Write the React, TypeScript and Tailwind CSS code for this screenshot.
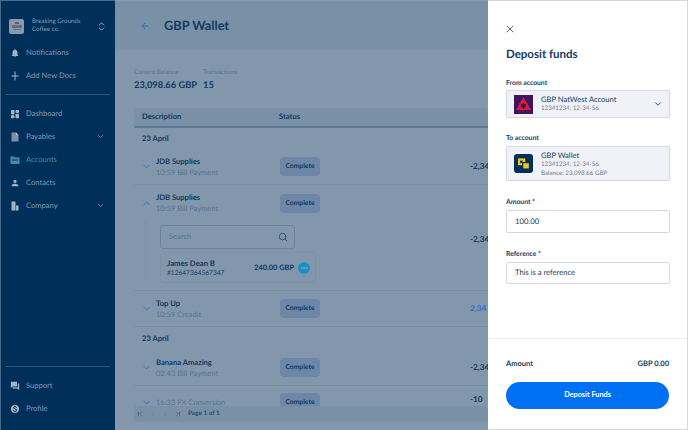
import React from 'react';
import { ArrowLeft, ChevronDown, ChevronUp, ChevronsUpDown, ChevronLeft, ChevronRight, ChevronFirst, ChevronLast, Search, X } from 'lucide-react';
import { MdNotifications, MdForum, MdMonetizationOn, MdPerson } from 'react-icons/md';

const NavItem: React.FC<{ icon: React.ReactNode; label: string; active?: boolean; caret?: boolean }> = ({ icon, label, active, caret }) => (
    <div className={`flex h-[23px] items-center pl-[9px] pr-[10px] text-[7.6px] ${active ? 'text-[#3f8f9c]' : 'text-[#8199b0]'}`}>
        <span className={`w-[16px] shrink-0 text-[10px] ${active ? 'text-[#3f8f9c]' : 'text-[#a5b3c2]'}`}>{icon}</span>
        <span className="flex-1">{label}</span>
        {caret && <ChevronDown size={9} className="text-[#8199b0]" />}
    </div>
);

const Badge = () => (
    <div className="flex h-[19px] w-[40px] shrink-0 items-center justify-center rounded-[4px] bg-[#6f87a6] text-[6.75px] font-bold text-[#0f3a63]">Complete</div>
);

const Row: React.FC<{ name?: string; sub: string; amount: string; open?: boolean; blue?: boolean; border?: boolean; last?: boolean }> = ({ name, sub, amount, open, blue, border = true, last }) => (
    <div className={`flex h-[36px] shrink-0 items-center pl-[7px] ${border ? 'border-b border-[#7890a6]' : ''} ${last ? 'pb-[3px]' : ''}`}>
        <span className="w-[15px] text-[#2a74c4]">{open ? <ChevronUp size={11} /> : <ChevronDown size={11} />}</span>
        <div className="w-[124px] leading-[11px]">
            {name && <div className="text-[7.6px] font-bold text-[#0f3a63]">{name}</div>}
            <div className="text-[7.5px] text-[#587390]">{sub}</div>
        </div>
        <Badge />
        <div className={`ml-auto w-[18px] whitespace-nowrap text-[8.2px] font-bold ${last ? 'mb-[7px]' : ''} ${blue ? 'text-[#2a74c4]' : 'text-[#0f3a63]'}`}>{amount}</div>
    </div>
);

const App: React.FC = () => {
    return (
        <div className="flex h-[430px] w-[688px] overflow-hidden bg-[#8297ab] font-['Lato',sans-serif] text-[#0f3a63] [text-rendering:geometricPrecision]">
            {/* sidebar */}
            <aside className="flex w-[115px] shrink-0 flex-col border-l border-t border-[#4a6a8c] bg-[#00305a]">
                <div className="flex h-[40px] items-center pl-[8px] pr-[8px] pt-[10px]">
                    <div className="flex h-[15px] w-[15px] shrink-0 flex-col items-center justify-center gap-[1px] rounded-[2px] bg-[#8a9aa8]">
                        <div className="h-[2px] w-[4px] bg-[#4f6377]" />
                        <div className="h-[3px] w-[10px] bg-[#5f7184]" />
                        <div className="h-[1px] w-[8px] bg-[#5f7184]" />
                    </div>
                    <div className="ml-[8px] flex-1 text-[6.2px] leading-[8.5px] text-[#8199b0]">Breaking Grounds<br />Coffee co.</div>
                    <ChevronsUpDown size={11} className="text-[#aab8c6]" />
                </div>
                <NavItem icon={<MdNotifications />} label="Notifications" />
                <NavItem
                    icon={
                        <svg viewBox="0 0 20 20" className="h-[10px] w-[10px]" fill="currentColor">
                            <path d="M9 1h2v18H9zM3 9h14v2H3z" />
                        </svg>
                    }
                    label="Add New Docs"
                />
                <div className="mx-[5px] mb-[7px] mt-[7px] border-b border-[#2b5479]" />
                <NavItem
                    icon={
                        <svg viewBox="0 0 20 20" className="h-[10px] w-[10px]" fill="currentColor">
                            <rect x="2" y="2" width="7" height="9" rx="1.5" />
                            <rect x="11" y="2" width="7" height="6" rx="1.5" />
                            <rect x="2" y="12.5" width="7" height="6" rx="1.5" />
                            <rect x="11" y="9.5" width="7" height="9" rx="1.5" />
                        </svg>
                    }
                    label="Dashboard"
                />
                <NavItem
                    icon={
                        <svg viewBox="0 0 20 20" className="h-[10px] w-[10px]" fill="#7e90a4">
                            <path d="M3 1h9l5 5v13H3z" />
                            <path d="M12 1l5 5h-5z" fill="#b9c5d1" />
                        </svg>
                    }
                    label="Payables"
                    caret
                />
                <NavItem
                    icon={
                        <svg viewBox="0 0 20 20" className="h-[10px] w-[10px]" fill="currentColor">
                            <path d="M1 3h7l2 2h9v13H1z" />
                            <path d="M4 9h12v2H4z" fill="#00305a" />
                        </svg>
                    }
                    label="Accounts"
                    active
                />
                <NavItem icon={<MdPerson />} label="Contacts" />
                <NavItem
                    icon={
                        <svg viewBox="0 0 20 20" className="h-[10px] w-[10px]" fill="currentColor">
                            <path d="M3 1h8v18H3zM12 9h5v10h-5z" />
                        </svg>
                    }
                    label="Company"
                    caret
                />
                <div className="mt-auto" />
                <div className="mx-[5px] mb-[7px] border-b border-[#2b5479]" />
                <NavItem icon={<MdForum />} label="Support" />
                <NavItem icon={<MdMonetizationOn />} label="Profile" />
                <div className="h-[10px]" />
            </aside>

            {/* wallet page */}
            <main className="flex min-w-0 flex-1 flex-col overflow-hidden">
                <header className="flex h-[50px] shrink-0 items-center border-t border-[#8a9bb5] bg-[#7a90a6] pl-[25px]">
                    <ArrowLeft size={10} strokeWidth={2.5} className="text-[#2a74c4]" />
                    <h1 className="ml-[14px] text-[12.75px] font-bold">GBP Wallet</h1>
                </header>
                <div className="flex min-h-0 flex-1 flex-col pb-[8px] pl-[19px]">
                    <div className="mt-[18px] flex shrink-0 gap-[6px]">
                        <div>
                            <div className="text-[6.3px] leading-[9px] text-[#587390]">Current Balance</div>
                            <div className="mt-[1px] text-[9.3px] font-bold leading-[13px]">23,098.66 GBP</div>
                        </div>
                        <div>
                            <div className="text-[6.3px] leading-[9px] text-[#587390]">Transactions</div>
                            <div className="mt-[1px] text-[9.3px] font-bold leading-[13px]">15</div>
                        </div>
                    </div>
                    <div className="mt-[17px] flex h-[20px] shrink-0 items-center rounded-t-[4px] border-b-2 border-[#5d7892] bg-[#7a90a6] px-[8px] text-[7.6px] font-bold">
                        <span className="w-[137px]">Description</span>
                        <span>Status</span>
                    </div>
                    <div className="flex min-h-0 flex-1 flex-col overflow-hidden">
                        <div className="flex h-[21px] shrink-0 items-center pl-[8px] text-[7.6px] font-bold">23 April</div>
                        <Row name="JDB Supplies" sub="10:59 Bill Payment" amount="-2,34" />
                        <Row name="JDB Supplies" sub="10:59 Bill Payment" amount="" open border={false} />
                        <div className="flex h-[70px] shrink-0 border-b border-[#7890a6]">
                            <div className="ml-[11px] mb-[8px] border-l border-[#7b91a7]" />
                            <div className="ml-[14px] mt-[4px] w-[156px]">
                                <div className="flex h-[24px] w-[135px] items-center justify-between rounded-[3px] border border-[#6a84a0] pl-[8px] pr-[6px] text-[7.6px] text-[#587390]">
                                    Search
                                    <Search size={10} className="text-[#1f4a72]" />
                                </div>
                                <div className="mt-[3px] flex h-[31px] items-center rounded-[3px] border border-[#7b91a7] pl-[6px] pr-[5px]">
                                    <div className="flex-1 leading-[10px]">
                                        <div className="text-[7.7px] font-bold">James Dean B</div>
                                        <div className="text-[6.6px]">#12647364567347</div>
                                    </div>
                                    <span className="text-[7.4px] font-bold">240.00 GBP</span>
                                    <div className="ml-[4px] flex h-[12px] w-[12px] items-center justify-center rounded-full bg-[#1591c9]">
                                        <div className="h-[2px] w-[7px] bg-[#7a90a6]" />
                                    </div>
                                </div>
                            </div>
                            <div className="ml-auto mt-[12px] w-[18px] whitespace-nowrap text-[8.2px] font-bold">-2,34</div>
                        </div>
                        <Row name="Top Up" sub="10:59 Creadit" amount="2,34" blue />
                        <div className="flex h-[23px] shrink-0 items-center pl-[8px] text-[7.6px] font-bold">23 April</div>
                        <Row name="Banana Amazing" sub="02:43 Bill Payment" amount="-2,34" />
                        <Row sub="16:33 FX Conversion" amount="-10" border={false} last />
                    </div>
                    <div className="flex h-[16px] shrink-0 items-center gap-[4px] rounded-[2px] bg-[#7a90a6] pl-[2px] text-[#36587a]">
                        <ChevronFirst size={8} />
                        <ChevronLeft size={8} className="ml-[1px] text-[#5f7b96]" />
                        <ChevronRight size={8} className="text-[#5f7b96]" />
                        <ChevronLast size={8} className="ml-[1px]" />
                        <span className="ml-[2px] text-[6.4px] font-bold text-[#1f4a72]">Page 1 of 1</span>
                    </div>
                </div>
            </main>

            {/* deposit drawer */}
            <section className="flex w-[200px] shrink-0 flex-col border-y border-r border-[#d5d6e6] bg-white pb-[20px] text-[#123c66]">
                <div className="flex flex-1 flex-col pl-[18px] pr-[17px]">
                    <X size={12} strokeWidth={1.5} className="-ml-[2px] mt-[22px]" />
                    <h2 className="mt-[11px] text-[11.5px] font-bold leading-[17px]">Deposit funds</h2>

                    <label className="mt-[15px] text-[6.8px] font-bold leading-[10px]">From account</label>
                    <div className="mt-[2px] flex h-[28px] items-center rounded-[2px] border border-[#d6d7e6] bg-[#f1f2f8] pl-[7px] pr-[6px]">
                        <div className="flex h-[19px] w-[19px] items-center justify-center bg-[#42145f]">
                            <svg viewBox="0 0 20 20" className="h-[17px] w-[17px]" fill="#d4202f">
                                <path d="M10 1.5L15 9.5h-3.5L10 7.8 8.5 9.5H5z" />
                                <path d="M10 1.5L15 9.5h-3.5L10 7.8 8.5 9.5H5z" transform="rotate(120 10 11.5)" />
                                <path d="M10 1.5L15 9.5h-3.5L10 7.8 8.5 9.5H5z" transform="rotate(240 10 11.5)" />
                            </svg>
                        </div>
                        <div className="ml-[8px] flex-1 leading-[10px]">
                            <div className="text-[7.6px]">GBP NatWest Account</div>
                            <div className="text-[6.2px] text-[#6e7f93]">12341234, 12-34-56</div>
                        </div>
                        <ChevronDown size={10} />
                    </div>

                    <label className="mt-[15px] text-[6.8px] font-bold leading-[10px]">To account</label>
                    <div className="mt-[3px] flex h-[35px] rounded-[2px] border border-[#d6d7e6] bg-[#f1f2f8] pl-[7px] pt-[3px]">
                        <div className="mt-[4px] flex h-[19px] w-[19px] items-center justify-center rounded-[3px] bg-[#00305a]">
                            <svg viewBox="0 0 20 20" className="h-[17px] w-[17px]">
                                <rect x="3.5" y="4" width="8.5" height="8" fill="#f5c518" />
                                <rect x="6" y="6.5" width="3" height="3" fill="#00305a" />
                                <rect x="9" y="9" width="8" height="7.5" fill="#f5c518" stroke="#00305a" strokeWidth="1.4" />
                            </svg>
                        </div>
                        <div className="ml-[8px] flex-1 leading-[8.5px]">
                            <div className="text-[7.6px] leading-[11px]">GBP Wallet</div>
                            <div className="text-[6.2px] text-[#6e7f93]">12341234, 12-34-56</div>
                            <div className="text-[6.2px] text-[#6e7f93]">Balance: 23,098.66 GBP</div>
                        </div>
                    </div>

                    <label className="mt-[16px] text-[6.8px] font-bold leading-[10px]">Amount *</label>
                    <div className="mt-[3px] flex h-[23px] items-center rounded-[2px] border border-[#d6d7e6] pl-[8px] text-[7.7px]">100.00</div>

                    <label className="mt-[16px] text-[6.8px] font-bold leading-[10px]">Reference *</label>
                    <div className="mt-[3px] flex h-[22px] items-center rounded-[2px] border border-[#d6d7e6] pl-[8px] text-[7.6px]">This is a reference</div>
                </div>
                <div className="border-t border-[#eeeef3] pl-[18px] pr-[18px] pt-[19px]">
                    <div className="flex justify-between text-[7.5px] font-bold leading-[11px]">
                        <span>Amount</span>
                        <span>GBP 0.00</span>
                    </div>
                    <button className="mt-[13px] h-[27px] w-full rounded-full bg-[#0070f3] text-[7.3px] font-bold text-white">Deposit Funds</button>
                </div>
            </section>
        </div>
    );
};

export default App;
